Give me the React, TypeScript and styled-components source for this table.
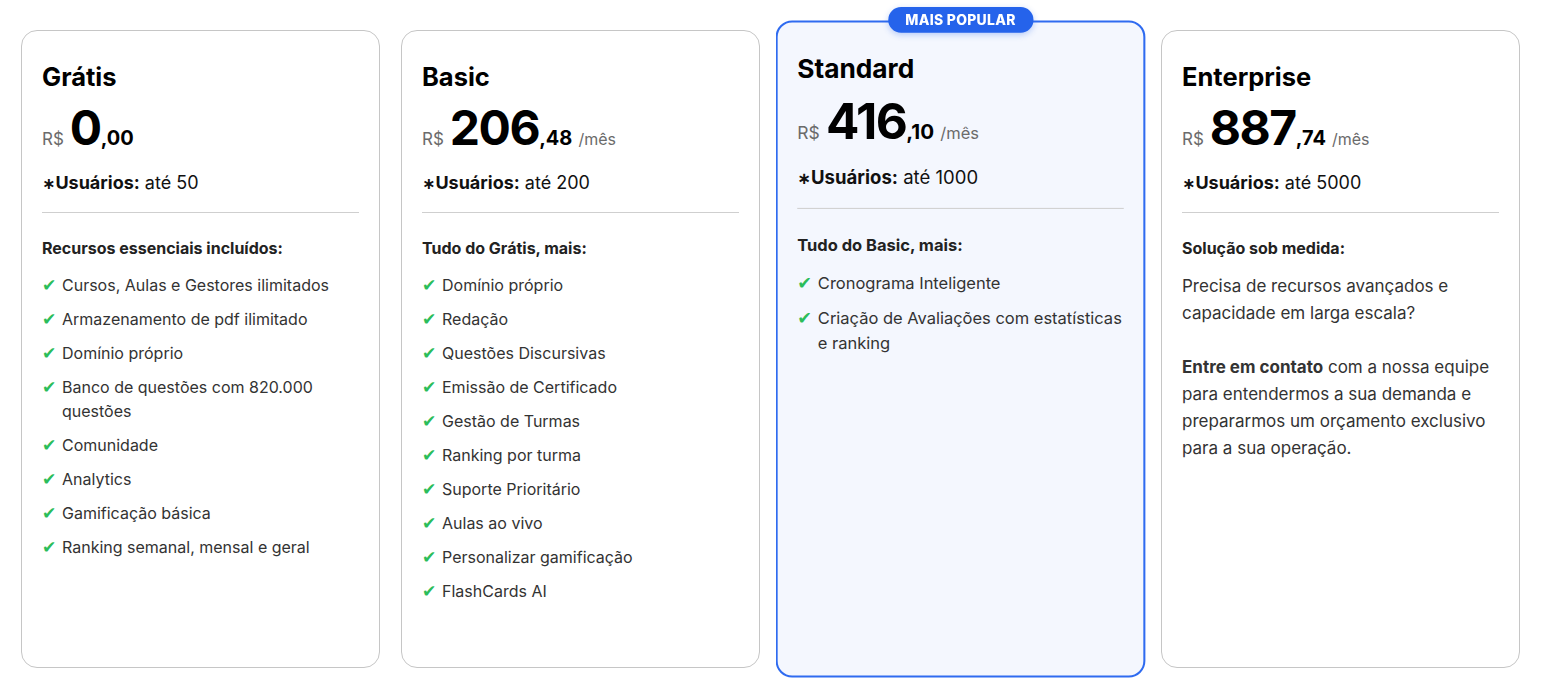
import React from 'react';
import styled, { createGlobalStyle } from 'styled-components';

const GlobalStyle = createGlobalStyle`
  body {
    margin: 0;
    background: #ffffff;
    font-family: Inter, 'Noto Sans', sans-serif;
    color: #111;
  }
`;

interface IPlan {
  name: string;
  whole: string;
  cents: string;
  monthly: boolean;
  users: string;
  heading: string;
  features?: string[];
  popular?: boolean;
  custom?: boolean;
}

const plans: IPlan[] = [
  {
    name: 'Grátis',
    whole: '0',
    cents: ',00',
    monthly: false,
    users: 'até 50',
    heading: 'Recursos essenciais incluídos:',
    features: [
      'Cursos, Aulas e Gestores ilimitados',
      'Armazenamento de pdf ilimitado',
      'Domínio próprio',
      'Banco de questões com 820.000 questões',
      'Comunidade',
      'Analytics',
      'Gamificação básica',
      'Ranking semanal, mensal e geral'
    ]
  },
  {
    name: 'Basic',
    whole: '206',
    cents: ',48',
    monthly: true,
    users: 'até 200',
    heading: 'Tudo do Grátis, mais:',
    features: [
      'Domínio próprio',
      'Redação',
      'Questões Discursivas',
      'Emissão de Certificado',
      'Gestão de Turmas',
      'Ranking por turma',
      'Suporte Prioritário',
      'Aulas ao vivo',
      'Personalizar gamificação',
      'FlashCards AI'
    ]
  },
  {
    name: 'Standard',
    whole: '416',
    cents: ',10',
    monthly: true,
    users: 'até 1000',
    heading: 'Tudo do Basic, mais:',
    popular: true,
    features: ['Cronograma Inteligente', 'Criação de Avaliações com estatísticas e ranking']
  },
  {
    name: 'Enterprise',
    whole: '887',
    cents: ',74',
    monthly: true,
    users: 'até 5000',
    heading: 'Solução sob medida:',
    custom: true
  }
];

const Page = styled.div`
  display: grid;
  grid-template-columns: repeat(4, 1fr);
  gap: 21px;
  padding: 30px 21px 18px;
`;

const Card = styled.div<{ $popular?: boolean }>`
  position: relative;
  box-sizing: border-box;
  height: 638px;
  padding: 31px 20px;
  border-radius: 16px;
  border: ${(p) => (p.$popular ? '2px solid #2f6bf0' : '1px solid #c6c6c6')};
  background: ${(p) => (p.$popular ? '#f4f7fe' : '#ffffff')};
  transform: ${(p) => (p.$popular ? 'scale(1.03)' : 'none')};
  ${(p) => (p.$popular ? 'padding: 30px 19px;' : '')}
`;

const Badge = styled.div`
  position: absolute;
  top: -15px;
  left: 50%;
  transform: translateX(-50%);
  height: 25px;
  padding: 0 17px;
  border-radius: 13px;
  background: #2563eb;
  color: #fff;
  font-size: 13.5px;
  font-weight: 800;
  letter-spacing: 0.3px;
  line-height: 25px;
  white-space: nowrap;
  box-shadow: 0 2px 6px rgba(37, 99, 235, 0.3);
`;

const Title = styled.h2`
  margin: 0;
  font-size: 25.5px;
  line-height: 30px;
  font-weight: 700;
  color: #000;
`;

const PriceRow = styled.div`
  display: flex;
  align-items: baseline;
  margin-top: 12px;
  line-height: 48px;
  height: 48px;
`;

const Currency = styled.span`
  font-size: 17px;
  color: #6b6b6b;
  margin-right: 6px;
`;

const Whole = styled.span`
  font-size: 48px;
  font-weight: 700;
  color: #000;
  letter-spacing: -1.5px;
`;

const Cents = styled.span`
  font-size: 20px;
  font-weight: 700;
  color: #000;
`;

const Period = styled.span`
  font-size: 16px;
  color: #6b6b6b;
  margin-left: 6px;
`;

const Users = styled.div`
  margin-top: 19px;
  height: 24px;
  font-size: 18px;
  line-height: 24px;
  color: #111;

  b {
    font-weight: 700;
  }
`;

const Star = styled.span`
  font-family: 'DejaVu Sans', sans-serif;
  font-weight: 700;
  font-size: 16px;
  line-height: 1;
`;

const Divider = styled.hr`
  margin: 17px 0 24px;
  border: 0;
  border-top: 1px solid #cfcfcf;
`;

const Heading = styled.div`
  font-size: 16px;
  line-height: 22px;
  font-weight: 700;
  color: #222;
`;

const List = styled.ul`
  list-style: none;
  margin: 14px 0 0;
  padding: 0;
  display: flex;
  flex-direction: column;
  gap: 10px;
`;

const Item = styled.li`
  display: flex;
  gap: 8px;
  font-size: 16px;
  line-height: 24px;
  color: #333;
`;

const Check = styled.span`
  flex: none;
  width: 12px;
  font-family: 'DejaVu Sans', sans-serif;
  font-size: 17px;
  font-weight: 700;
  color: #2bbd5a;
`;

const Text = styled.p`
  margin: 14px 0 0;
  font-size: 17px;
  line-height: 27px;
  color: #333;

  b {
    font-weight: 700;
  }
`;

const PlanCard = ({ plan }: { plan: IPlan }) => (
  <Card $popular={plan.popular}>
    {plan.popular && <Badge>MAIS POPULAR</Badge>}
    <Title>{plan.name}</Title>
    <PriceRow>
      <Currency>R$</Currency>
      <Whole>{plan.whole}</Whole>
      <Cents>{plan.cents}</Cents>
      {plan.monthly && <Period>/mês</Period>}
    </PriceRow>
    <Users>
      <b>
        <Star>∗</Star>Usuários:
      </b>{' '}
      {plan.users}
    </Users>
    <Divider />
    <Heading>{plan.heading}</Heading>
    {plan.custom ? (
      <Text>
        Precisa de recursos avançados e capacidade em larga escala?
        <br />
        <br />
        <b>Entre em contato</b> com a nossa equipe para entendermos a sua demanda e prepararmos um orçamento
        exclusivo para a sua operação.
      </Text>
    ) : (
      <List>
        {plan.features?.map((f) => (
          <Item key={f}>
            <Check>✔</Check>
            <span>{f}</span>
          </Item>
        ))}
      </List>
    )}
  </Card>
);

const App = () => {
  return (
    <>
      <GlobalStyle />
      <Page>
        {plans.map((p) => (
          <PlanCard key={p.name} plan={p} />
        ))}
      </Page>
    </>
  );
};

export default App;
